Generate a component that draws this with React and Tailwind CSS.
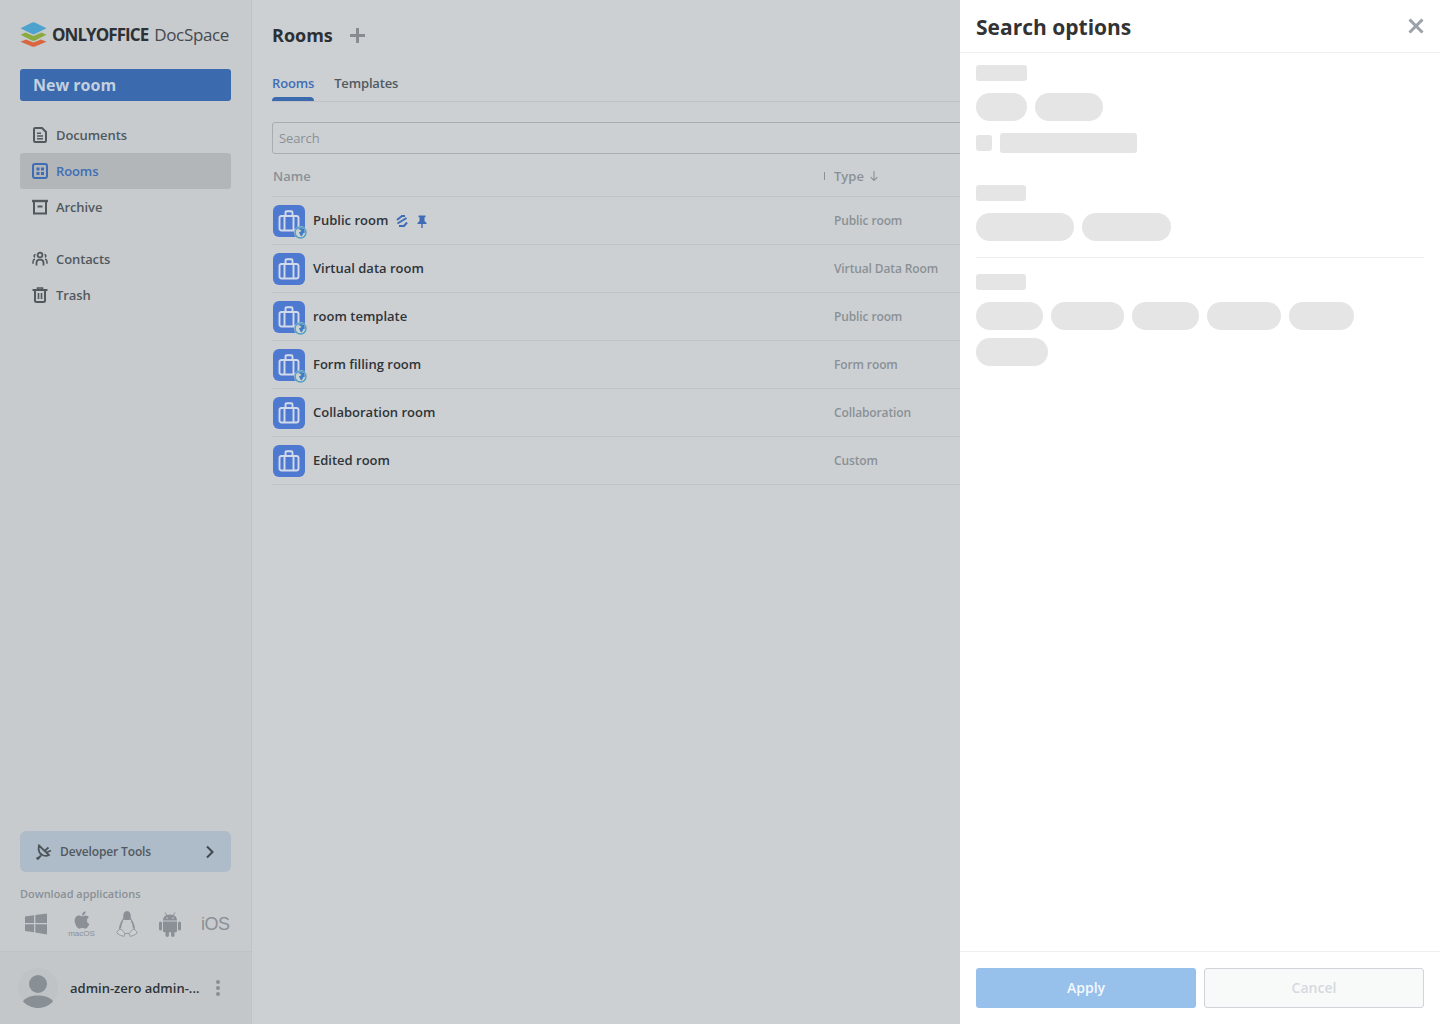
import React from "react";
import { FaApple } from "react-icons/fa";

const font = { fontFamily: '"Open Sans", sans-serif' };

function Logo() {
  return (
    <svg width="27" height="25" viewBox="0 0 27 25" className="shrink-0">
      <path d="M6 17.5 L13.5 20.6 L21 17.5 L26.5 19.8 L15 24.6 Q13.5 25 12 24.6 L0.5 19.8 Z" fill="#d9663f" />
      <path d="M5.5 10.5 L13.5 14 L21.5 10.5 L26.5 12.8 L15 18.6 Q13.5 19.2 12 18.6 L0.5 12.8 Z" fill="#8aab3e" />
      <path d="M12.2 0.5 Q13.5 0 14.8 0.5 L26.5 6.2 L14.8 12 Q13.5 12.5 12.2 12 L0.5 6.2 Z" fill="#4da3cd" />
    </svg>
  );
}

function DocIcon() {
  return (
    <svg width="16" height="16" viewBox="0 0 16 16" fill="none" stroke="#51595f" strokeWidth="2">
      <path d="M2 2.2 Q2 1 3.2 1 H10 L14 5 V13.8 Q14 15 12.8 15 H3.2 Q2 15 2 13.8 Z" />
      <path d="M5 6.2h4M5 9h6M5 11.8h6" strokeWidth="1.5" />
    </svg>
  );
}
function RoomsIcon() {
  return (
    <svg width="16" height="16" viewBox="0 0 16 16" fill="none">
      <rect x="1" y="1" width="14" height="14" rx="2" stroke="#3f6db5" strokeWidth="2" />
      <rect x="4.5" y="4.5" width="3" height="3" fill="#3f6db5" />
      <rect x="9" y="4.5" width="3" height="3" fill="#3f6db5" />
      <rect x="4.5" y="9" width="3" height="3" fill="#3f6db5" />
      <rect x="9" y="9" width="3" height="3" fill="#3f6db5" />
    </svg>
  );
}
function ArchiveIcon() {
  return (
    <svg width="16" height="16" viewBox="0 0 16 16" fill="none" stroke="#51595f" strokeWidth="2">
      <path d="M0 2h16" strokeWidth="2.4" />
      <path d="M2 3V14.5H14V3" />
      <path d="M5.5 7.5h5" />
    </svg>
  );
}
function ContactsIcon() {
  return (
    <svg width="16" height="16" viewBox="0 0 16 16" fill="none" stroke="#51595f" strokeWidth="1.8">
      <circle cx="8" cy="4" r="2.4" />
      <path d="M4.5 14.5v-3Q4.5 8.6 8 8.6t3.5 2.9v3" />
      <path d="M3.6 3.4a1.6 1.6 0 0 0-.6 3M12.4 3.4a1.6 1.6 0 0 1 .6 3" strokeWidth="1.5" />
      <path d="M1 12.8v-1.8q0-2.4 2-3M15 12.8v-1.8q0-2.4-2-3" strokeWidth="1.5" />
    </svg>
  );
}
function TrashIcon() {
  return (
    <svg width="16" height="16" viewBox="0 0 16 16" fill="none" stroke="#51595f" strokeWidth="2">
      <path d="M0.5 3h15" />
      <path d="M5.5 3V1h5V3" strokeWidth="1.6" />
      <path d="M3 3.5V13.5Q3 15 4.5 15H11.5Q13 15 13 13.5V3.5" />
      <path d="M6.5 6v6M9.5 6v6" strokeWidth="1.6" />
    </svg>
  );
}
function DevIcon() {
  return (
    <svg width="16" height="16" viewBox="0 0 16 16" fill="none" stroke="#4d555b" strokeWidth="1.8">
      <path d="M3 1.5 L13 11 Q10.5 12.5 7.5 11.5 Q3.5 10 2.8 6.5 Q2.4 3.5 3 1.5Z" />
      <path d="M8.5 7 L12.5 3.5 M10.5 8.5 L15 6.5" />
      <path d="M5 11.5 L2 14.5" strokeWidth="2" />
      <circle cx="1.8" cy="14.2" r="1.5" fill="#4d555b" stroke="none" />
    </svg>
  );
}
function LinuxIcon() {
  return (
    <svg width="22" height="26" viewBox="0 0 22 26" fill="none" stroke="#8a9096" strokeWidth="0.8">
      <path d="M11 0.5C8.5 0.5 7.8 2.5 7.8 5C7.8 7.5 7 8.5 5.5 11C4 13.5 3.2 16.5 3.5 19L7 22.5H15L18.5 19C18.8 16.5 18 13.5 16.5 11C15 8.5 14.2 7.5 14.2 5C14.2 2.5 13.5 0.5 11 0.5Z" />
      <path d="M8 2C8.5 0.9 9.5 0.4 11 0.4C12.5 0.4 13.5 0.9 14 2L14.6 7C14.9 8.2 15.6 9 16 10L14 8.5C12.5 9.3 9.5 9.3 8 8.5L6 10C6.4 9 7.1 8.2 7.4 7Z" fill="#8a9096" stroke="none" />
      <path d="M6.6 9.5 Q4.6 13 4.2 17.5 M15.4 9.5 Q17.4 13 17.8 17.5" strokeWidth="1.4" />
      <path d="M3.5 18.5 L0.8 21 L1.8 23 L5 24.5 L8 25.4 L8.8 22.5 L5.5 18.5Z M18.5 18.5 L21.2 21 L20.2 23 L17 24.5 L14 25.4 L13.2 22.5 L16.5 18.5Z" fill="#cbd0d3" />
    </svg>
  );
}
function WindowsIcon() {
  return (
    <svg width="22" height="22" viewBox="0 0 23 22" fill="#8a9096">
      <path d="M0 3.2 L9.5 1.8 V10 H0 Z" />
      <path d="M10.8 1.6 L23 0 V10 H10.8 Z" />
      <path d="M0 11.2 H9.5 V19.6 L0 18.2 Z" />
      <path d="M10.8 11.2 H23 V22 L10.8 20 Z" />
    </svg>
  );
}
function AndroidIcon() {
  return (
    <svg width="22" height="25" viewBox="0 0 22 25" fill="#8a9096">
      <path d="M4 8.5 Q4 2.5 11 2.5 Q18 2.5 18 8.5 Z" />
      <path d="M6 0.5 L8 3.5 M16 0.5 L14 3.5" stroke="#8a9096" strokeWidth="1" />
      <path d="M4 9.5H18V19Q18 20.2 16.5 20.2H5.5Q4 20.2 4 19Z" />
      <rect x="0" y="9.5" width="3" height="9" rx="1.5" />
      <rect x="19" y="9.5" width="3" height="9" rx="1.5" />
      <rect x="6.5" y="18" width="3.4" height="7" rx="1.7" />
      <rect x="12.1" y="18" width="3.4" height="7" rx="1.7" />
      <circle cx="8" cy="6" r="0.8" fill="#c7cbce" />
      <circle cx="14" cy="6" r="0.8" fill="#c7cbce" />
    </svg>
  );
}
function Briefcase() {
  return (
    <svg width="22" height="22" viewBox="0 0 22 22" fill="none" stroke="#d3dbeb" strokeWidth="1.9">
      <rect x="1.5" y="6" width="19" height="14.5" rx="2" />
      <path d="M7.5 6V2.5Q7.5 1.2 8.8 1.2H13.2Q14.5 1.2 14.5 2.5V6" />
      <path d="M6.5 6V20M15.5 6V20" />
    </svg>
  );
}
function Globe() {
  return (
    <svg width="13" height="13" viewBox="0 0 13 13" className="absolute -right-[2px] -bottom-[2px]">
      <circle cx="6.5" cy="6.5" r="6.5" fill="#ccd0d3" />
      <circle cx="6.5" cy="6.5" r="5.5" fill="#ccd0d3" stroke="#4fa0c5" strokeWidth="1.4" />
      <path d="M3 3 Q6 3 7.5 4.5 Q6.5 6 5 6.5 L7 10.5 Q9 9.5 9 7.5 L11 6.5 L10 3 L7 2 Z" fill="#3f7dc0" />
    </svg>
  );
}
function SubIcon() {
  return (
    <svg width="12" height="12" viewBox="0 0 12 12" fill="none" stroke="#3f6db5" strokeWidth="2">
      <path d="M1 5 L6 1 H9" />
      <path d="M1.5 8.5 L10.5 3" />
      <path d="M3 11 H8 L11 7.5" />
    </svg>
  );
}
function PinIcon() {
  return (
    <svg width="10" height="13" viewBox="0 0 10 13" fill="#3f6db5">
      <path d="M1.5 0.5H8.5V2L7.5 2.6V6L9.5 8V9H5.7V13H4.3V9H0.5V8L2.5 6V2.6L1.5 2Z" />
    </svg>
  );
}
function Avatar() {
  return (
    <div className="w-10 h-10 rounded-full bg-[#bfc3c6] overflow-hidden shrink-0">
      <svg width="40" height="40" viewBox="0 0 40 40" fill="#888f95">
        <circle cx="20" cy="16" r="9" />
        <path d="M4.5 34C7 30 12 27.5 20 27.5S33 30 35.5 34C32 38 26 40 20 40S8 38 4.5 34Z" />
      </svg>
    </div>
  );
}

const nav1 = [
  { label: "Documents", icon: <DocIcon /> },
  { label: "Rooms", icon: <RoomsIcon />, active: true },
  { label: "Archive", icon: <ArchiveIcon /> },
];
const nav2 = [
  { label: "Contacts", icon: <ContactsIcon /> },
  { label: "Trash", icon: <TrashIcon /> },
];

function NavItem({ item }) {
  return (
    <div className={`h-9 flex items-center pl-3 gap-2 rounded-[3px] ${item.active ? "bg-[#b2b6b9]" : ""}`}>
      <span className="w-4 h-4 flex shrink-0">{item.icon}</span>
      <span className={`pt-[2px] text-[13px] font-semibold tracking-[-0.1px] ${item.active ? "text-[#3f6db5]" : "text-[#51595f]"}`}>{item.label}</span>
    </div>
  );
}

const rooms = [
  { name: "Public room", type: "Public room", globe: true, extras: true },
  { name: "Virtual data room", type: "Virtual Data Room" },
  { name: "room template", type: "Public room", globe: true },
  { name: "Form filling room", type: "Form room", globe: true },
  { name: "Collaboration room", type: "Collaboration" },
  { name: "Edited room", type: "Custom" },
];

function Sk({ className }) {
  return <div className={`bg-[#e5e5e5] ${className}`} />;
}
function Pill({ className }) {
  return <div className={`bg-[#e5e5e5] h-7 rounded-full ${className}`} />;
}

export default function App() {
  return (
    <div style={font} className="w-[1440px] h-[1024px] flex overflow-hidden bg-[#ccd0d3]">
      <aside className="w-[252px] shrink-0 h-full flex flex-col bg-[#c7cbce] border-r border-[#bfc3c6]">
        <div className="pl-5 pr-5 flex flex-col flex-1">
          <div className="h-[69px] flex items-center w-[211px] pb-[1px] whitespace-nowrap">
            <Logo />
            <span className="ml-[5px] text-[#2c3135] leading-none font-bold text-[17px] tracking-[-0.95px]">ONLYOFFICE</span>
            <span className="ml-[6px] text-[#44494e] leading-none text-[17px] tracking-[-0.35px]">DocSpace</span>
          </div>
          <div className="h-8 w-[211px] bg-[#3b6aae] rounded-[3px] flex items-center pl-[13px] text-[16px] font-bold text-[#c3d0de]">New room</div>
          <nav className="mt-4 w-[211px]">
            {nav1.map((i) => <NavItem key={i.label} item={i} />)}
            <div className="h-4" />
            {nav2.map((i) => <NavItem key={i.label} item={i} />)}
          </nav>
          <div className="flex-1" />
          <div className="w-[211px] h-[41px] rounded-[6px] bg-[#aebbc9] flex items-center pl-4 pr-4">
            <DevIcon />
            <span className="ml-[8px] text-[12px] font-semibold tracking-[-0.13px] text-[#51595f]">Developer Tools</span>
            <svg className="ml-auto" width="10" height="14" viewBox="0 0 10 14" fill="none" stroke="#41474c" strokeWidth="2"><path d="M2 1.5 L7.5 7 L2 12.5" /></svg>
          </div>
          <div className="mt-[14px] h-4 flex items-center text-[11px] font-semibold tracking-[-0.03px] text-[#8a9096]">Download applications</div>
          <div className="mt-[6px] mb-[11px] h-8 w-[211px] flex items-center justify-between pl-[5px] pr-[2px]">
            <WindowsIcon />
            <div className="w-[28px] flex flex-col items-center leading-none">
              <FaApple size={20} color="#8a9096" />
              <span style={{ fontFamily: '"Liberation Sans", sans-serif' }} className="text-[8px] text-[#8a9096] leading-[8px]">macOS</span>
            </div>
            <LinuxIcon />
            <AndroidIcon />
            <span style={{ fontFamily: '"Liberation Sans", sans-serif' }} className="w-[28px] text-[18px] tracking-[-0.5px] text-[#8a9096] leading-none whitespace-nowrap">iOS</span>
          </div>
        </div>
        <div className="h-[73px] border-t border-[#bfc3c6] bg-[#c3c7ca] flex items-center pl-[18px] pb-[1px]">
          <Avatar />
          <span className="ml-3 pt-[2px] text-[13px] font-semibold text-[#2f3438] whitespace-nowrap">admin-zero admin-...</span>
          <svg className="ml-[16px]" width="4" height="18" viewBox="0 0 4 18" fill="#888f95">
            <circle cx="2" cy="3" r="2" /><circle cx="2" cy="9" r="2" /><circle cx="2" cy="15" r="2" />
          </svg>
        </div>
      </aside>

      <main className="w-[708px] shrink-0 h-full overflow-hidden pl-5">
        <div className="h-[70px] flex items-center">
          <h1 className="text-[18px] leading-none font-bold text-[#2c3135]">Rooms</h1>
          <svg className="ml-[17px]" width="15" height="15" viewBox="0 0 15 15" stroke="#868c92" strokeWidth="3"><path d="M7.5 0V15M0 7.5H15" /></svg>
        </div>
        <div className="h-8 border-b border-[#bfc3c6] flex gap-5">
          <div className="relative h-full pt-[4px] text-[13px] font-semibold tracking-[-0.15px] text-[#3f6db5]">
            Rooms
            <div className="absolute left-0 right-0 bottom-0 h-1 rounded-t-[4px] bg-[#3b6aae]" />
          </div>
          <div className="pt-[4px] text-[13px] font-semibold tracking-[-0.15px] text-[#51595f]">Templates</div>
        </div>
        <div className="mt-5 h-8 w-[720px] border border-[#a8adb1] rounded-[3px] flex items-center pl-[6px] pt-[2px] text-[13px] tracking-[-0.1px] text-[#8a9096]">Search</div>
        <div className="h-[43px] border-b border-[#bfc3c6] flex items-center pl-[1px] pt-[3px] text-[13px] font-semibold text-[#8a9096]">
          <span className="w-[551px]">Name</span>
          <span className="w-[1px] h-2 bg-[#8a9096] -mt-[2px]" />
          <span className="ml-[9px]">Type</span>
          <svg className="ml-[6px] -mt-[2px]" width="8" height="10" viewBox="0 0 8 10" fill="none" stroke="#8a9096" strokeWidth="1.1"><path d="M4 0V9.5M0.7 6.2 L4 9.5 L7.3 6.2" /></svg>
        </div>
        {rooms.map((r) => (
          <div key={r.name} className="h-12 border-b border-[#bfc3c6] flex items-center pl-[1px]">
            <div className="relative w-8 h-8 rounded-[6px] bg-[#4d79d0] flex items-center justify-center shrink-0">
              <Briefcase />
              {r.globe && <Globe />}
            </div>
            <div className="w-[521px] ml-2 flex items-center text-[13px] font-semibold text-[#2f3438] pt-[1px]">
              <span>{r.name}</span>
              {r.extras && (
                <span className="flex items-center ml-2 gap-[9px]"><SubIcon /><PinIcon /></span>
              )}
            </div>
            <span className="text-[12px] font-semibold tracking-[-0.12px] text-[#8a9096] whitespace-nowrap">{r.type}</span>
          </div>
        ))}
      </main>

      <section className="w-[480px] shrink-0 h-full bg-white flex flex-col">
        <header className="h-[53px] shrink-0 border-b border-[#eceef1] flex items-center justify-between pl-4 pr-4">
          <h2 className="pt-[3px] text-[21px] font-bold text-[#333333]">Search options</h2>
          <svg width="16" height="16" viewBox="0 0 16 16" stroke="#9aa1a8" strokeWidth="3"><path d="M1.5 1.5 L14.5 14.5 M14.5 1.5 L1.5 14.5" /></svg>
        </header>
        <div className="flex-1 px-4 pt-3">
          <Sk className="w-[51px] h-4 rounded-[3px]" />
          <div className="mt-3 flex gap-2"><Pill className="w-[51px]" /><Pill className="w-[68px]" /></div>
          <div className="mt-3 flex items-center gap-2">
            <Sk className="w-4 h-4 rounded-[3px]" />
            <Sk className="w-[137px] h-5 rounded-[3px]" />
          </div>
          <Sk className="mt-8 w-[50px] h-4 rounded-[3px]" />
          <div className="mt-3 flex gap-2"><Pill className="w-[98px]" /><Pill className="w-[89px]" /></div>
          <div className="mt-4 h-[1px] bg-[#eceef1]" />
          <Sk className="mt-4 w-[50px] h-4 rounded-[3px]" />
          <div className="mt-3 flex gap-2">
            <Pill className="w-[67px]" /><Pill className="w-[73px]" /><Pill className="w-[67px]" /><Pill className="w-[74px]" /><Pill className="w-[65px]" />
          </div>
          <Pill className="mt-2 w-[72px]" />
        </div>
        <footer className="h-[73px] shrink-0 border-t border-[#eceef1] px-4 pt-4 flex gap-2">
          <div className="w-[220px] h-10 rounded-[3px] bg-[#97c0eb] flex items-center justify-center pb-[2px] text-[14px] font-semibold text-[#f3f8fd]">Apply</div>
          <div className="w-[220px] h-10 rounded-[3px] bg-[#f8f9f9] border border-[#d0d5da] flex items-center justify-center pb-[2px] text-[14px] font-semibold text-[#d4d9de]">Cancel</div>
        </footer>
      </section>
    </div>
  );
}
